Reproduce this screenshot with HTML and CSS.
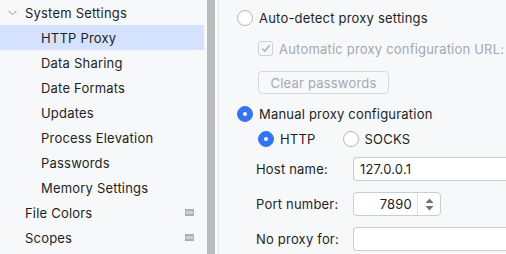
FILE: index.html
```html
<!DOCTYPE html>
<html>
<head>
<meta charset="utf-8">
<link rel="stylesheet" href="styles.css">
</head>
<body>
<div class="app">
  <nav class="tree">
    <div class="row parent">
      <svg class="chev" width="9" height="6" viewBox="0 0 9 6"><path d="M0.5 0.8 L4.5 4.8 L8.5 0.8" fill="none" stroke="#8c909a" stroke-width="1"/></svg>
      <span>System Settings</span>
    </div>
    <div class="row child selected"><span>HTTP Proxy</span></div>
    <div class="row child"><span>Data Sharing</span></div>
    <div class="row child"><span>Date Formats</span></div>
    <div class="row child"><span>Updates</span></div>
    <div class="row child"><span>Process Elevation</span></div>
    <div class="row child"><span>Passwords</span></div>
    <div class="row child"><span>Memory Settings</span></div>
    <div class="row top"><span>File Colors</span><svg class="proj" width="9" height="7" viewBox="0 0 9 7"><rect x="0" y="0" width="9" height="7" fill="#a7b0ba"/><rect x="1" y="2" width="7" height="3" fill="#c9d0d7"/></svg></div>
    <div class="row top"><span>Scopes</span><svg class="proj" width="9" height="7" viewBox="0 0 9 7"><rect x="0" y="0" width="9" height="7" fill="#a7b0ba"/><rect x="1" y="2" width="7" height="3" fill="#c9d0d7"/></svg></div>
  </nav>
  <div class="splitter"></div>
  <main class="panel">
    <div class="opt">
      <span class="radio"></span><span>Auto-detect proxy settings</span>
    </div>
    <div class="opt sub disabled">
      <span class="check"><svg width="10" height="9" viewBox="0 0 10 9"><path d="M1.2 4.6 L3.8 7.2 L8.8 1.2" fill="none" stroke="#a9aeb6" stroke-width="1.4"/></svg></span><span>Automatic proxy configuration URL:</span>
    </div>
    <div class="sub btnrow"><button class="btn" disabled>Clear passwords</button></div>
    <div class="opt manual">
      <span class="radio on"></span><span>Manual proxy configuration</span>
    </div>
    <div class="opt sub types">
      <span class="radio on"></span><span class="lbl-http">HTTP</span>
      <span class="radio"></span><span>SOCKS</span>
    </div>
    <div class="form">
      <label>Host name:</label>
      <div class="field wide">127.0.0.1</div>
      <label>Port number:</label>
      <div class="spin">
        <div class="spin-val">7890</div>
        <div class="spin-btn"><svg width="9" height="13" viewBox="0 0 9 13"><path d="M4.5 0.5 L8.5 5 L0.5 5 Z" fill="#6f737a"/><path d="M4.5 12.5 L8.5 8 L0.5 8 Z" fill="#6f737a"/></svg></div>
      </div>
      <label>No proxy for:</label>
      <div class="field wide"></div>
    </div>
  </main>
</div>
</body>
</html>
```

FILE: styles.css
```css
html, body {
  margin: 0;
  padding: 0;
  background: #f7f8fa;
}
body {
  font-family: Inter, "Noto Sans", sans-serif;
  font-size: 13px;
  letter-spacing: 0.2px;
  color: #1e1f22;
  width: 506px;
  height: 254px;
  overflow: hidden;
}
.app {
  display: flex;
  height: 254px;
}
.tree {
  width: 207px;
  flex: none;
  display: flex;
  flex-direction: column;
}
.row {
  height: 25px;
  width: 204px;
  display: flex;
  align-items: center;
  box-sizing: border-box;
  white-space: nowrap;
}
.row.parent { padding-left: 8px; }
.chev { margin-right: 8px; margin-top: 1px; }
.row.child { padding-left: 41px; }
.row.top { padding-left: 25px; padding-right: 10px; justify-content: space-between; }
.row.selected { background: #d4e2ff; }
.splitter {
  width: 8px;
  flex: none;
  background: #bcbcbc;
}
.panel {
  flex: 1;
  margin-left: 3px;
  border-left: 1px solid #e6e7ea;
  padding-left: 18px;
  padding-top: 6px;
  display: flex;
  flex-direction: column;
  white-space: nowrap;
  overflow: hidden;
}
.opt {
  display: flex;
  align-items: center;
  height: 24px;
}
.sub { padding-left: 21px; }
.disabled { color: #a3a8b1; margin-top: 6px; height: 25px; }
.radio {
  width: 14px;
  height: 14px;
  border: 1px solid #b4b8bf;
  border-radius: 50%;
  background: #ffffff;
  margin-right: 6px;
  flex: none;
  box-sizing: content-box;
}
.radio.on {
  background: #3574f0;
  border-color: #3574f0;
  position: relative;
}
.radio.on::after {
  content: "";
  position: absolute;
  left: 5px;
  top: 5px;
  width: 4px;
  height: 4px;
  border-radius: 50%;
  background: #ffffff;
}
.check {
  width: 13px;
  height: 13px;
  border: 1px solid #cdd0d6;
  border-radius: 3px;
  margin-right: 6px;
  display: flex;
  align-items: center;
  justify-content: center;
  flex: none;
}
.btnrow { margin-top: 10px; display: flex; }
.btn {
  font-family: inherit;
  font-size: 13px;
  letter-spacing: 0.2px;
  height: 23px;
  width: 131px;
  padding: 0;
  border: 1px solid #d5d7dc;
  border-radius: 4px;
  background: #f7f8fa;
  color: #a3a8b1;
}
.manual { margin-top: 8px; }
.types { height: 25px; }
.lbl-http { margin-right: 27px; }
.form {
  margin-top: 6px;
  display: grid;
  grid-template-columns: 97px 1fr;
  grid-auto-rows: 24px;
  row-gap: 11px;
  align-items: center;
  padding-left: 19px;
}
.form label { line-height: 24px; }
.field {
  height: 24px;
  box-sizing: border-box;
  border: 1px solid #c9ccd3;
  border-radius: 4px 0 0 4px;
  border-right: none;
  background: #ffffff;
  padding-left: 6px;
  line-height: 22px;
  margin-right: -4px;
}
.spin {
  width: 88px;
  height: 24px;
  box-sizing: border-box;
  border: 1px solid #c9ccd3;
  border-radius: 4px;
  background: #ffffff;
  display: flex;
}
.spin-val {
  flex: 1;
  text-align: right;
  padding-right: 5px;
  line-height: 22px;
  border-right: 1px solid #dfe1e5;
}
.spin-btn {
  width: 22px;
  display: flex;
  align-items: center;
  justify-content: center;
}
```
